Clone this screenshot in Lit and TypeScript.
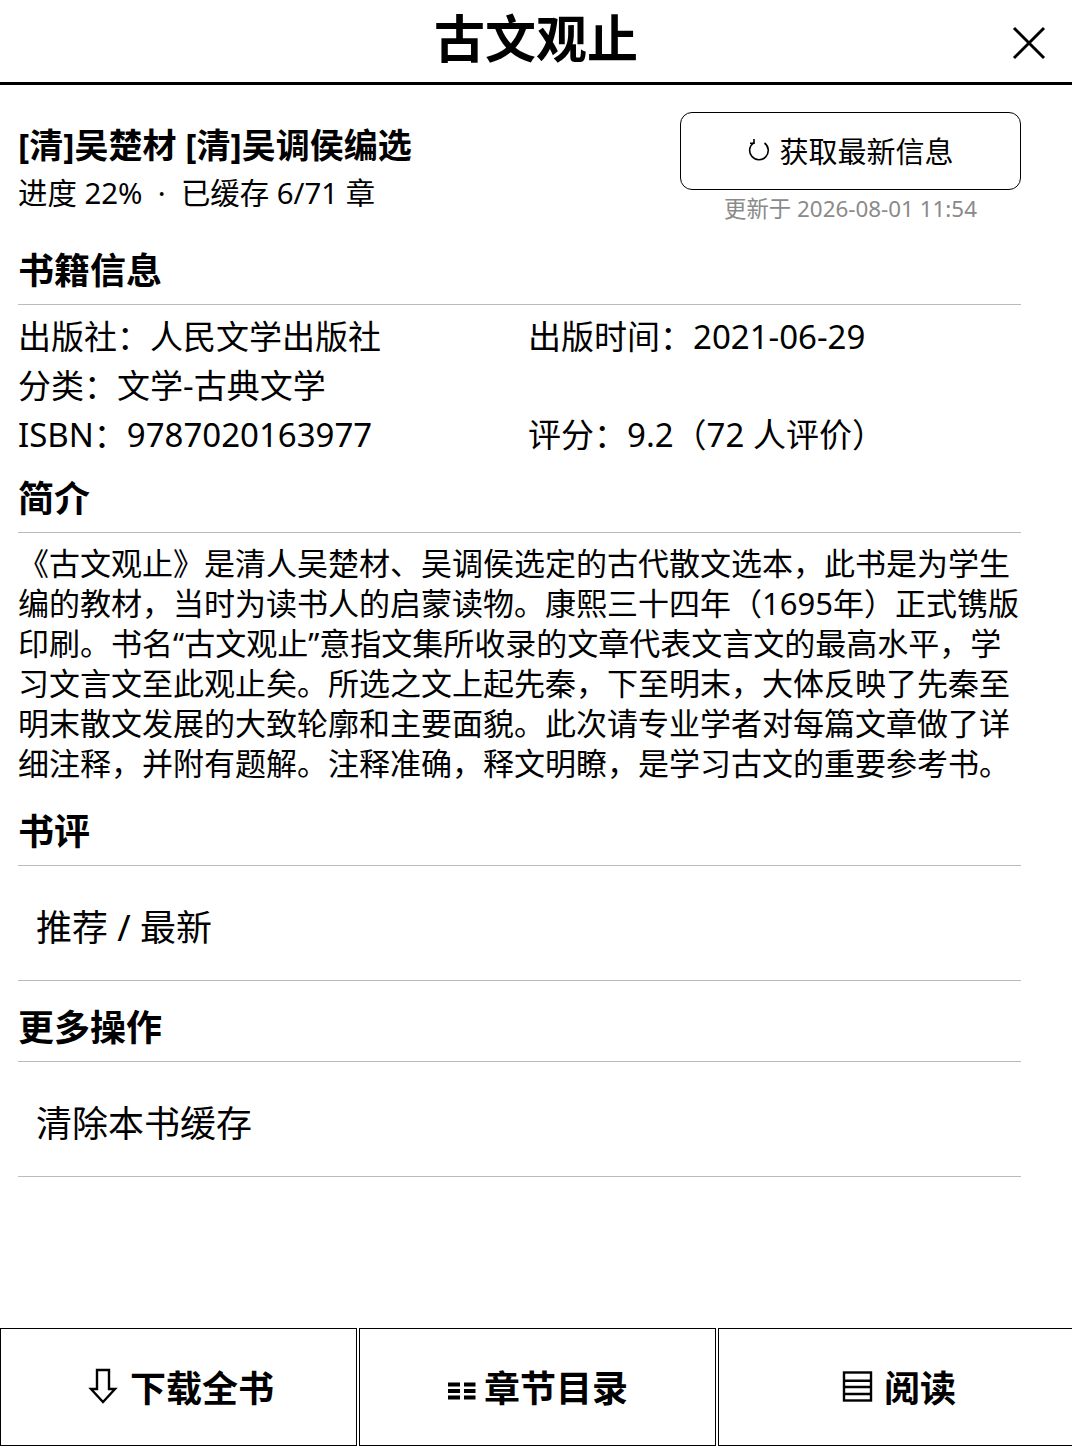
import { LitElement, html, css } from "lit";
import { customElement } from "lit/decorators.js";

@customElement("app-root")
export class AppRoot extends LitElement {
  static styles = css`
    :host { display: block; width: 1072px; height: 1448px; background: #fff; color: #000; overflow: hidden;
      font-family: "Noto Sans", "Noto Sans CJK SC", sans-serif; font-size: 33px; }
    .page { display: flex; flex-direction: column; height: 1448px; overflow: hidden; }
    .title { height: 82px; border-bottom: 3px solid #000; display: flex; justify-content: center; position: relative; flex: none; }
    .title h1 { margin: 0; font-size: 51px; font-weight: 700; line-height: 77px; }
    .close { position: absolute; right: 26px; top: 26px; width: 34px; height: 34px; }
    .body { flex: 1; padding: 0 51px 0 18px; }
    .head { display: flex; justify-content: space-between; padding-top: 27px; margin-bottom: 17px; }
    .who { font-size: 34px; font-weight: 700; line-height: 46px; margin-top: 10px; }
    .prog { font-size: 29.4px; line-height: 48px; margin-top: 1px; }
    .rightcol { width: 341px; display: flex; flex-direction: column; align-items: center; }
    .btn { box-sizing: border-box; width: 341px; height: 78px; flex: none; border: 1px solid #000; border-radius: 12px; padding-bottom: 2px; display: flex; align-items: center; justify-content: center; font-size: 29px; }
    .upd { font-size: 22.4px; color: #8a8a8a; line-height: 38px; }
    h2 { margin: 0; font-size: 36px; font-weight: 700; line-height: 52px; }
    .sec { border-bottom: 1px solid #bbb; padding-bottom: 7px; }
    .sec.gap { margin-top: 14px; }
    .sec.gap2 { margin-top: 21px; }
    .info { display: grid; grid-template-columns: 510px 1fr; font-size: 33px; line-height: 49px; padding-top: 7px; }
    .desc { font-size: 31px; line-height: 40px; margin: 10px 0 23px; }
    .row { box-sizing: border-box; height: 115px; padding: 5px 0 0 18px; display: flex; align-items: center; border-bottom: 1px solid #bbb; font-size: 36px; }
    .foot { display: flex; gap: 2px; height: 118px; flex: none; margin-bottom: 2px; }
    .foot div { flex: 0 0 357px; box-sizing: border-box; border: 1px solid #000; padding-bottom: 2px; display: flex; align-items: center; justify-content: center; font-size: 36px; font-weight: 700; }
  `;
  render() {
    return html`<div class="page">
      <div class="title"><h1>古文观止</h1>
        <svg class="close" viewBox="0 0 34 34" fill="none" stroke="#000" stroke-width="3"><path d="M2 2L32 32M32 2L2 32"/></svg>
      </div>
      <div class="body">
        <div class="head">
          <div><div class="who">[清]吴楚材 [清]吴调侯编选</div><div class="prog">进度 22% &nbsp;·&nbsp; 已缓存 6/71 章</div></div>
          <div class="rightcol"><div class="btn"><svg width="32" height="24" viewBox="0 0 32 24" fill="none" stroke="#000" stroke-width="1.6"><path d="M7 4.6A9.3 9.3 0 1 0 17.5 5"/><path d="M7 1V5.2H3"/></svg>获取最新信息</div><div class="upd">更新于 2026-08-01 11:54</div></div>
        </div>
        <h2 class="sec">书籍信息</h2>
        <div class="info"><div>出版社：人民文学出版社</div><div>出版时间：2021-06-29</div><div>分类：文学-古典文学</div><div></div><div>ISBN：9787020163977</div><div>评分：9.2（72 人评价）</div></div>
        <h2 class="sec gap">简介</h2>
        <div class="desc">《古文观止》是清人吴楚材、吴调侯选定的古代散文选本，此书是为学生编的教材，当时为读书人的启蒙读物。康熙三十四年（1695年）正式镌版印刷。书名“古文观止”意指文集所收录的文章代表文言文的最高水平，学习文言文至此观止矣。所选之文上起先秦，下至明末，大体反映了先秦至明末散文发展的大致轮廓和主要面貌。此次请专业学者对每篇文章做了详细注释，并附有题解。注释准确，释文明瞭，是学习古文的重要参考书。</div>
        <h2 class="sec">书评</h2>
        <div class="row">推荐 / 最新</div>
        <h2 class="sec gap2">更多操作</h2>
        <div class="row">清除本书缓存</div>
      </div>
      <div class="foot">
        <div><svg width="47" height="40" viewBox="0 0 47 40" fill="none" stroke="#000" stroke-width="2.4"><path d="M14 4H26V23H32L20 36L8 23H14Z"/></svg>下载全书</div>
        <div><svg width="37" height="40" viewBox="0 0 37 40" fill="#000"><rect x="1" y="16.5" width="12" height="4"/><rect x="17" y="16.5" width="11.5" height="4"/><rect x="1" y="23" width="12" height="4"/><rect x="17" y="23" width="11.5" height="4"/><rect x="1" y="29.5" width="12" height="4"/><rect x="17" y="29.5" width="11.5" height="4"/></svg>章节目录</div>
        <div><svg width="47" height="40" viewBox="0 0 47 40" fill="none" stroke="#000" stroke-width="2.4"><rect x="7" y="6.5" width="27" height="28"/><path d="M7 14.7H34M7 21H34M7 28H34"/></svg>阅读</div>
      </div>
    </div>`;
  }
}
